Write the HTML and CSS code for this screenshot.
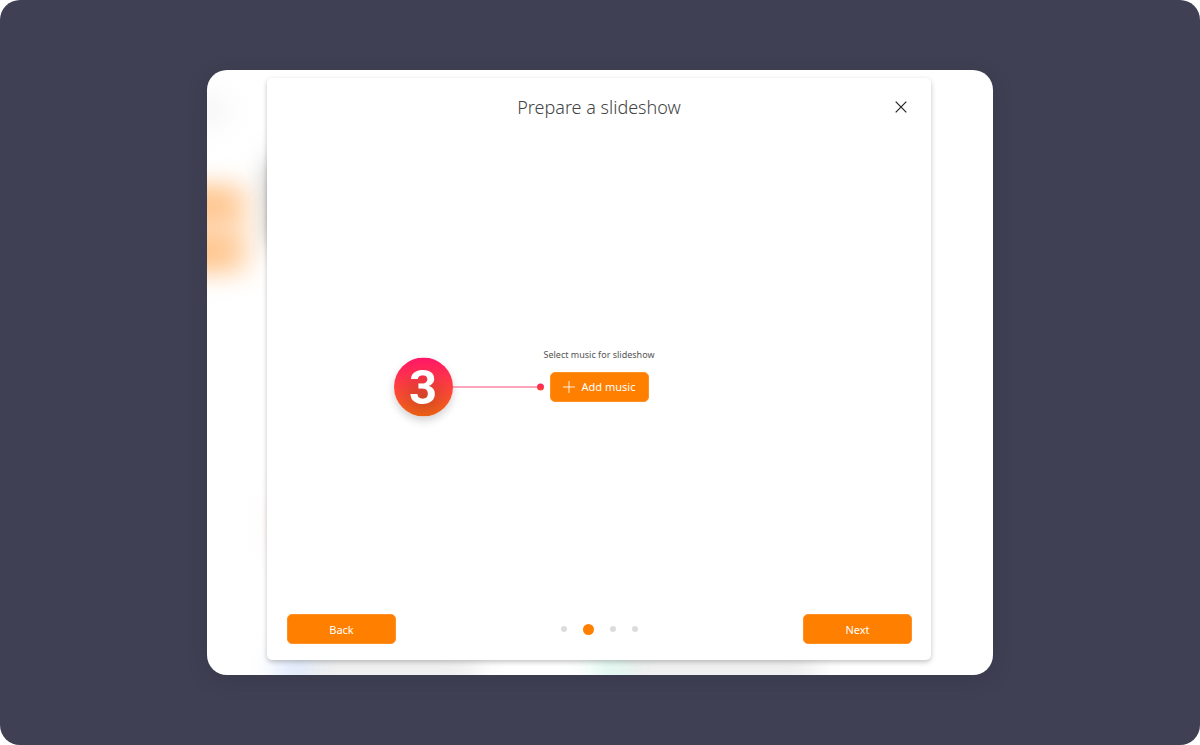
FILE: index.html
```html
<!DOCTYPE html>
<html lang="en">
<head>
  <meta charset="UTF-8">
  <meta name="viewport" content="width=device-width, initial-scale=1">
  <title>Prepare a slideshow</title>
  <link rel="stylesheet" href="styles.css">
</head>
<body>

  <main class="stage">
    <div class="window">

      <!-- Blurred page behind the dialog -->
      <div class="backdrop" aria-hidden="true">
        <span class="blob blob-gray"></span>
        <span class="blob blob-photo"></span>
        <span class="blob blob-orange"></span>
        <span class="blob blob-orange-row"></span>
        <span class="blob blob-orange-row blob-orange-low"></span>
        <span class="blob blob-pink"></span>
        <span class="blob blob-bottom"></span>
        <span class="blob blob-blue"></span>
        <span class="blob blob-bottom blob-bottom-right"></span>
        <span class="blob blob-green"></span>
      </div>

      <section class="dialog" role="dialog" aria-labelledby="dialog-title">
        <header class="dialog-header">
          <h1 id="dialog-title">Prepare a slideshow</h1>
          <button class="close-btn" type="button" aria-label="Close">
            <svg width="12" height="12" viewBox="0 0 12 12">
              <path d="M0.7 0.7L11.3 11.3M11.3 0.7L0.7 11.3" stroke="#222" stroke-width="1.2" fill="none"/>
            </svg>
          </button>
        </header>

        <div class="dialog-content">
          <p class="hint">Select music for slideshow</p>
          <div class="add-music">
            <button class="btn add-btn" type="button">
              <svg width="12" height="12" viewBox="0 0 12 12">
                <path d="M6 0V12M0 6H12" stroke="#fff" stroke-width="0.9" fill="none"/>
              </svg>
              Add music
            </button>
            <div class="callout">
              <span class="callout-number">3</span>
              <span class="callout-line"></span>
              <span class="callout-dot"></span>
            </div>
          </div>
        </div>

        <footer class="dialog-footer">
          <button class="btn nav-btn" type="button">Back</button>
          <div class="steps">
            <span class="step"></span>
            <span class="step active"></span>
            <span class="step"></span>
            <span class="step"></span>
          </div>
          <button class="btn nav-btn" type="button">Next</button>
        </footer>
      </section>

    </div>
  </main>

</body>
</html>
```
FILE: styles.css
```css
* {
  box-sizing: border-box;
}

body {
  margin: 0;
  background-color: #ffffff;
  font-family: "Noto Sans", "Open Sans", sans-serif;
}

.stage {
  display: flex;
  justify-content: center;
  min-height: 100vh;
  padding: 70px 20px;
  background-color: #3f4053;
  border-radius: 20px;
}

.window {
  position: relative;
  display: flex;
  width: 100%;
  max-width: 786px;
  padding: 8px 62px 15px 60px;
  background-color: #ffffff;
  border-radius: 20px;
  box-shadow: 0 4px 20px rgba(30, 30, 45, 0.2);
}

/* Backdrop */
.backdrop {
  position: absolute;
  inset: 0;
  overflow: hidden;
  border-radius: 20px;
}

.blob {
  position: absolute;
  filter: blur(14px);
}

.blob-gray {
  left: -20px;
  top: 26px;
  width: 40px;
  height: 30px;
  background-color: #f5f5f5;
}

.blob-photo {
  left: 66px;
  top: 92px;
  width: 40px;
  height: 82px;
  background-color: #8a8a8a;
}

.blob-orange {
  left: -40px;
  top: 118px;
  width: 80px;
  height: 84px;
  background-color: #ffdfbf;
}

.blob-orange-row {
  left: -40px;
  top: 122px;
  width: 70px;
  height: 24px;
  background-color: #ffbb7a;
}

.blob-orange-low {
  top: 170px;
}

.blob-pink {
  left: 66px;
  top: 430px;
  width: 20px;
  height: 50px;
  background-color: #ffeeee;
}

.blob-bottom {
  left: 90px;
  bottom: -6px;
  width: 180px;
  height: 24px;
  background-color: #e6e6e6;
}

.blob-bottom-right {
  left: 410px;
  width: 200px;
}

.blob-blue {
  left: 70px;
  bottom: -6px;
  width: 34px;
  height: 24px;
  background-color: #cfe0ff;
}

.blob-green {
  left: 386px;
  bottom: -6px;
  width: 36px;
  height: 24px;
  background-color: #cff6e8;
}

/* Dialog */
.dialog {
  position: relative;
  display: flex;
  flex: 1;
  flex-direction: column;
  background-color: #ffffff;
  border-radius: 5px;
  box-shadow: 0 2px 5px rgba(0, 0, 0, 0.24);
}

.dialog-header {
  display: grid;
  grid-template-columns: 40px 1fr 40px;
  align-items: center;
  height: 58px;
  padding: 0 10px;
}

.dialog-header h1 {
  grid-column: 2;
  margin: 0;
  color: #444444;
  font-size: 18px;
  font-weight: 300;
  line-height: 28px;
  text-align: center;
}

.close-btn {
  display: flex;
  align-items: center;
  justify-content: center;
  width: 40px;
  height: 40px;
  padding: 0;
  background: none;
  border: none;
  cursor: pointer;
}

.dialog-content {
  display: flex;
  flex: 1;
  flex-direction: column;
  align-items: center;
  justify-content: center;
  gap: 9px;
  padding-bottom: 2px;
}

.hint {
  margin: 0;
  color: #555555;
  font-size: 9px;
  line-height: 16px;
}

.btn {
  display: flex;
  align-items: center;
  justify-content: center;
  height: 30px;
  padding: 0;
  background-color: #ff7f00;
  border: 1px solid #ff9126;
  border-radius: 5px;
  color: #ffffff;
  font-family: inherit;
  font-size: 11px;
  cursor: pointer;
}

.add-music {
  position: relative;
}

.add-btn {
  gap: 7px;
  width: 99px;
}

/* Numbered pointer next to the button */
.callout {
  position: absolute;
  top: 50%;
  right: 100%;
  display: flex;
  align-items: center;
  margin-right: 6px;
  transform: translateY(-50%);
}

.callout-number {
  width: 59px;
  height: 59px;
  background: radial-gradient(circle at 50% 70%, rgba(120, 50, 20, 0.35), transparent 60%), linear-gradient(#ff1668, #ff6a14);
  border-radius: 50%;
  box-shadow: 0 4px 9px rgba(0, 0, 0, 0.18);
  color: #ffffff;
  font-family: Roboto, sans-serif;
  font-size: 49px;
  font-weight: 700;
  line-height: 59px;
  text-align: center;
}

.callout-line {
  width: 84px;
  height: 1px;
  background-color: #fa4d7c;
}

.callout-dot {
  width: 7px;
  height: 7px;
  background: linear-gradient(#ff1f62, #fc4a32);
  border-radius: 50%;
}

.dialog-footer {
  display: flex;
  align-items: center;
  justify-content: space-between;
  padding: 0 19px 16px 20px;
}

.nav-btn {
  width: 109px;
}

.steps {
  display: flex;
  align-items: center;
  gap: 16px;
}

.step {
  width: 6px;
  height: 6px;
  background-color: #dcdcdc;
  border-radius: 50%;
}

.step.active {
  width: 11px;
  height: 11px;
  background-color: #ff7f00;
}
```
